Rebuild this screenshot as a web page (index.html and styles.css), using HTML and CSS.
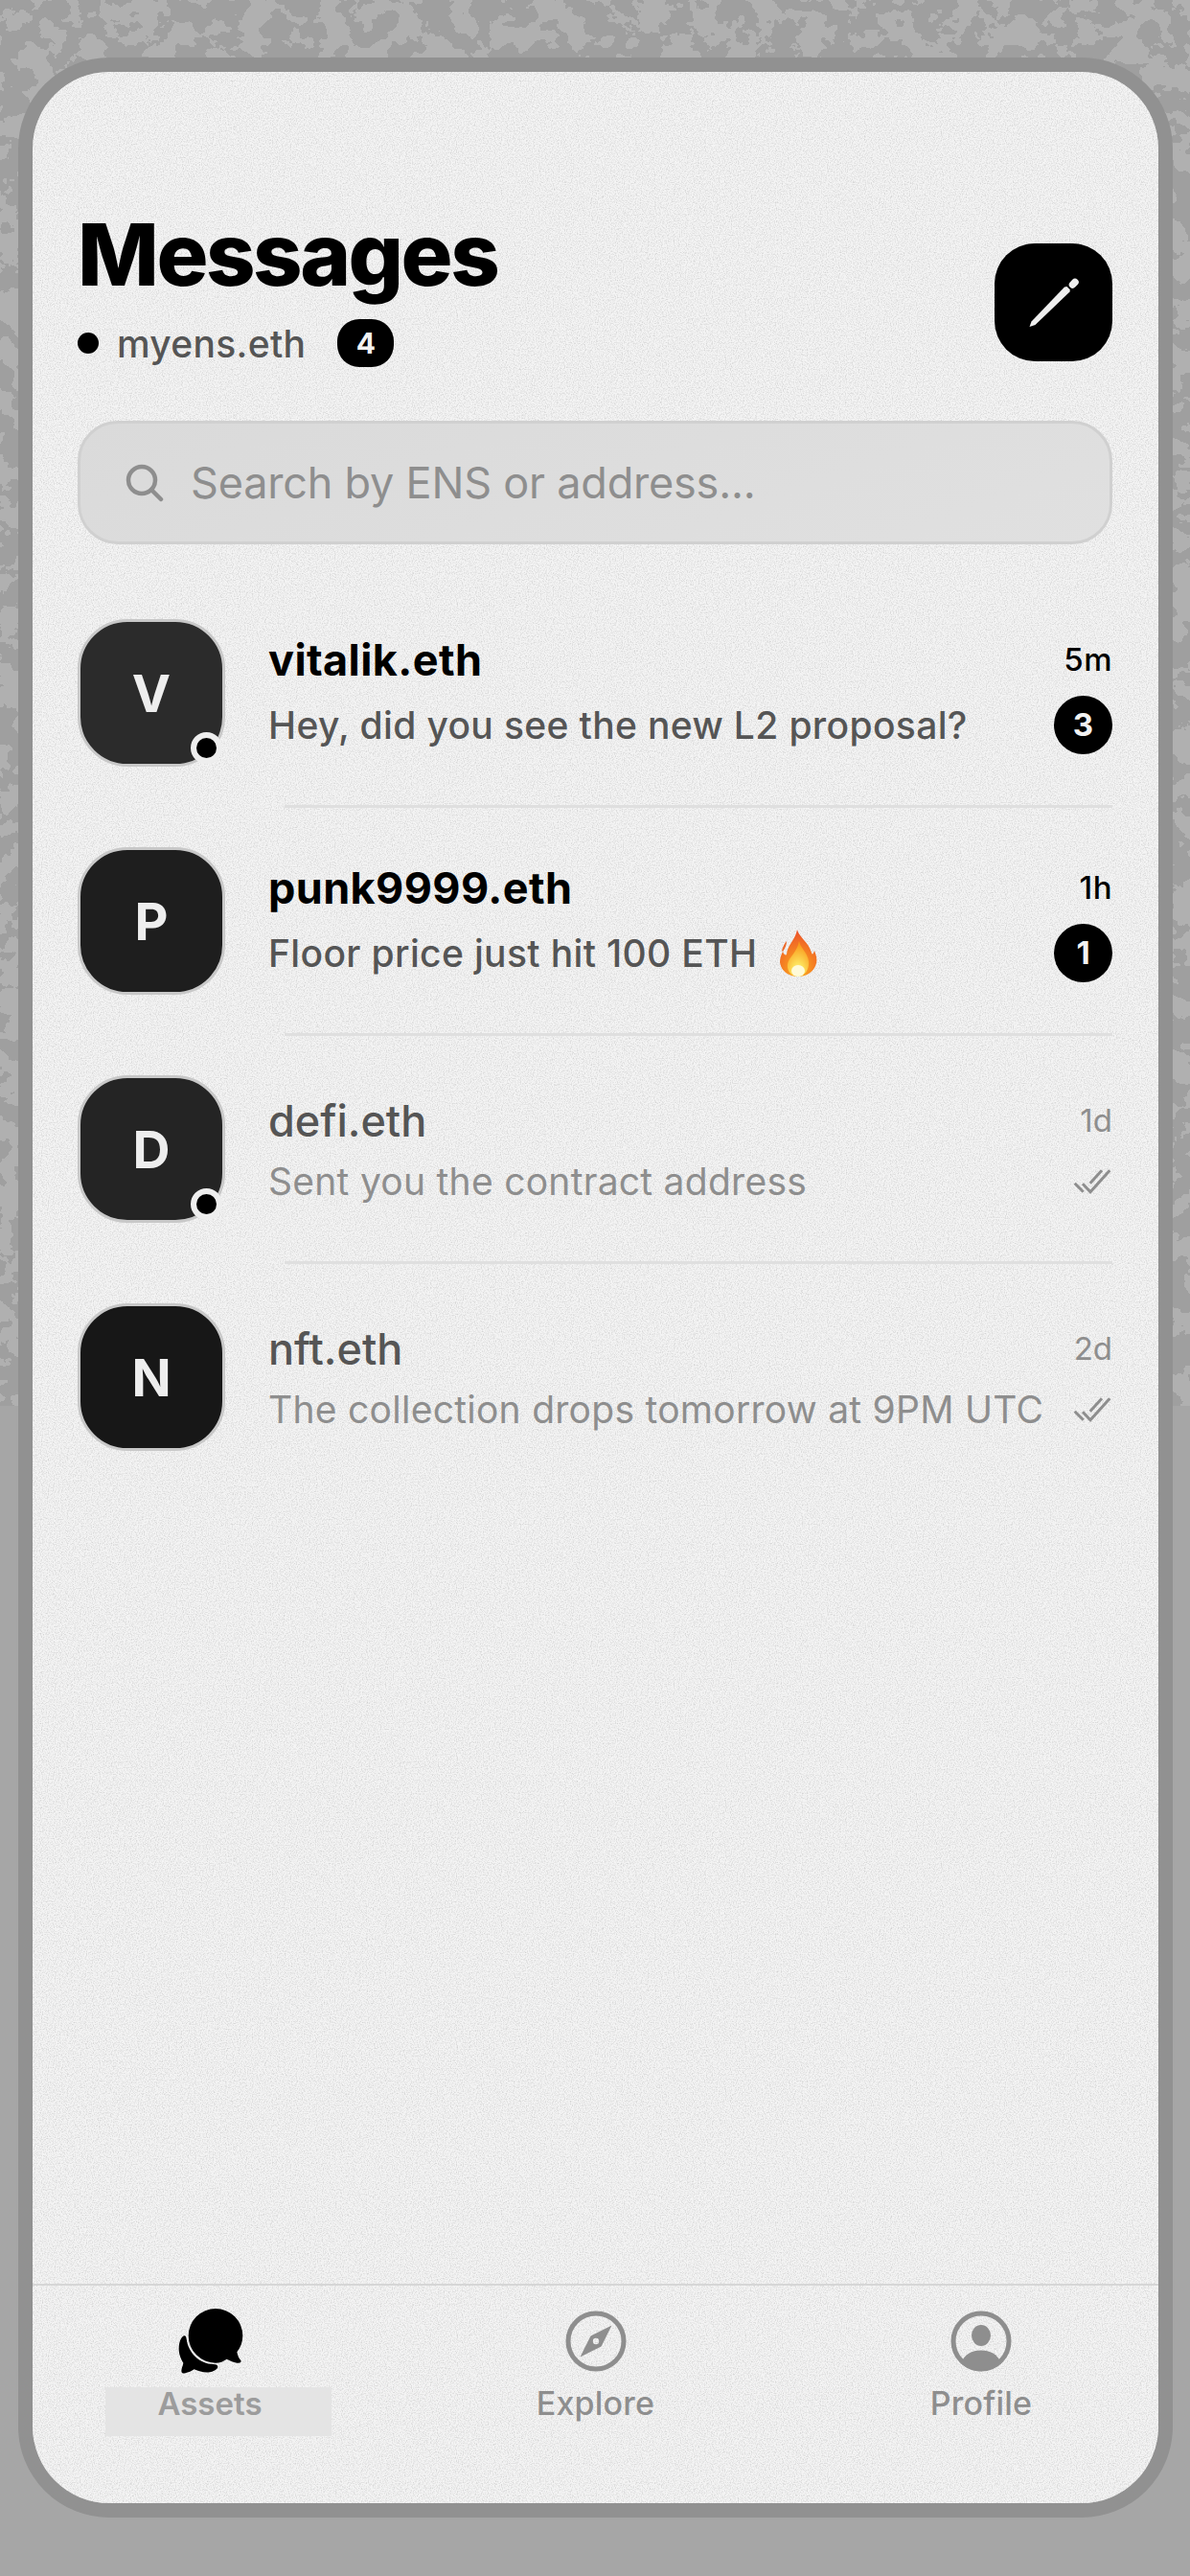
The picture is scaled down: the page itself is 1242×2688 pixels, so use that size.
FILE: index.html
```html
<!DOCTYPE html>
<html lang="en">
<head>
<meta charset="utf-8">
<title>Messages</title>
<link rel="stylesheet" href="styles.css">
</head>
<body>
<svg class="blotches" xmlns="http://www.w3.org/2000/svg" aria-hidden="true">
  <defs>
    <filter id="blotch" x="0" y="0" width="100%" height="100%" color-interpolation-filters="sRGB">
      <feTurbulence type="fractalNoise" baseFrequency="0.036 0.042" numOctaves="4" seed="7"/>
      <feColorMatrix values="0 0 0 0 0.625  0 0 0 0 0.625  0 0 0 0 0.625  1 0 0 0 0"/>
      <feComponentTransfer><feFuncA type="discrete" tableValues="0 1"/></feComponentTransfer>
    </filter>
  </defs>
  <rect class="blotch-base" width="100%" height="100%"/>
  <rect width="100%" height="100%" filter="url(#blotch)"/>
</svg>
<main class="frame">
  <div class="card">
    <svg class="grain" xmlns="http://www.w3.org/2000/svg" aria-hidden="true">
      <defs>
        <filter id="noise" x="0" y="0" width="100%" height="100%" color-interpolation-filters="sRGB">
          <feTurbulence type="fractalNoise" baseFrequency="0.85" numOctaves="2" seed="3"/>
          <feColorMatrix values="0.8 0 0 0 0.53  0.8 0 0 0 0.53  0.8 0 0 0 0.53  0 0 0 0 0.35"/>
        </filter>
      </defs>
      <rect width="100%" height="100%" filter="url(#noise)"/>
    </svg>
    <div class="content">
      <header class="header">
        <div class="heading">
          <h1 class="title">Messages</h1>
          <div class="identity">
            <span class="identity-dot"></span>
            <span class="identity-name">myens.eth</span>
            <span class="identity-count">4</span>
          </div>
        </div>
        <button class="compose" type="button" aria-label="New message">
          <svg class="compose-icon" viewBox="0 0 123 123" xmlns="http://www.w3.org/2000/svg">
            <path class="pencil-body" d="M36.5 87 L38.5 81.5 L73 45.5 L75.5 45 L78.8 48.3 L78.5 50.5 L42.5 85 Z"/>
            <path class="pencil-cap" d="M81.5 43 L84 40.4"/>
          </svg>
        </button>
      </header>

      <div class="search">
        <svg class="search-icon" viewBox="0 0 40 40" xmlns="http://www.w3.org/2000/svg">
          <circle cx="17" cy="17" r="14"/>
          <path d="M27 27 L37 37"/>
        </svg>
        <span class="search-text">Search by ENS or address...</span>
      </div>

      <section class="list">
        <article class="row unread">
          <div class="avatar avatar-v">V<span class="online"></span></div>
          <div class="row-body">
            <div class="row-top"><span class="name">vitalik.eth</span><span class="time">5m</span></div>
            <div class="row-bottom"><span class="msg">Hey, did you see the new L2 proposal?</span><span class="count">3</span></div>
          </div>
        </article>
        <div class="divider"></div>
        <article class="row unread">
          <div class="avatar avatar-p">P</div>
          <div class="row-body">
            <div class="row-top"><span class="name">punk9999.eth</span><span class="time">1h</span></div>
            <div class="row-bottom">
              <span class="msg">Floor price just hit 100 ETH
                <svg class="flame" viewBox="0 0 39 49" xmlns="http://www.w3.org/2000/svg">
                  <defs>
                    <radialGradient id="fl-a" cx="0.5" cy="0.85" r="0.85">
                      <stop offset="0" stop-color="#fbb521"/>
                      <stop offset="0.55" stop-color="#f47a22"/>
                      <stop offset="1" stop-color="#ea4f2c"/>
                    </radialGradient>
                    <radialGradient id="fl-b" cx="0.5" cy="0.9" r="0.8">
                      <stop offset="0" stop-color="#fff6b0"/>
                      <stop offset="0.35" stop-color="#fde05a"/>
                      <stop offset="1" stop-color="#f99a1c"/>
                    </radialGradient>
                  </defs>
                  <path fill="url(#fl-a)" d="M18 0 C20 8 30 13 33 24 C34 27 35 25 36 22 C38 27 39 31 38 35 C36 44 28 49 19 49 C9 49 1 43 0 34 C0 30 1 27 3 23 C4 26 6 27 7 26 C7 17 16 11 18 0Z"/>
                  <path fill="#ec6a2b" d="M2 22 C3 18 5 14 7 12 C7 15 6 19 3 23Z"/>
                  <path fill="url(#fl-b)" d="M20 12 C21 19 29 24 30 33 C31 41 26 49 19 49 C12 49 7 43 8 36 C9 29 18 24 20 12Z"/>
                  <ellipse cx="19" cy="43" rx="7" ry="6" fill="#fffbd8"/>
                </svg>
              </span>
              <span class="count">1</span>
            </div>
          </div>
        </article>
        <div class="divider"></div>
        <article class="row">
          <div class="avatar avatar-d">D<span class="online"></span></div>
          <div class="row-body">
            <div class="row-top"><span class="name">defi.eth</span><span class="time">1d</span></div>
            <div class="row-bottom">
              <span class="msg">Sent you the contract address</span>
              <svg class="read" viewBox="0 0 46 32" xmlns="http://www.w3.org/2000/svg">
                <path d="M6.7 18.7 L15.7 27.7 M15 19.3 L23 27.7 L43.3 5.3 M22.7 18.7 L35 5.3"/>
              </svg>
            </div>
          </div>
        </article>
        <div class="divider"></div>
        <article class="row">
          <div class="avatar avatar-n">N</div>
          <div class="row-body">
            <div class="row-top"><span class="name">nft.eth</span><span class="time">2d</span></div>
            <div class="row-bottom">
              <span class="msg">The collection drops tomorrow at 9PM UTC</span>
              <svg class="read" viewBox="0 0 46 32" xmlns="http://www.w3.org/2000/svg">
                <path d="M6.7 18.7 L15.7 27.7 M15 19.3 L23 27.7 L43.3 5.3 M22.7 18.7 L35 5.3"/>
              </svg>
            </div>
          </div>
        </article>
      </section>

      <nav class="nav">
        <div class="tab tab-active">
          <svg class="tab-icon" viewBox="126 81 222 222" xmlns="http://www.w3.org/2000/svg">
            <path class="chat" d="M255 90 A85 85 0 0 1 340 175 C340 195 333 212 322 226 C324 238 329 248 334 252 C337 257 331 262 322 260 C310 258 298 252 290 248 C280 255 268 260 255 260 A85 85 0 0 1 255 90Z"/>
            <path class="chat" d="M157 175 C147 178 140 195 140 215 C140 235 148 250 154 260 C152 270 148 278 148 285 C148 292 154 294 160 292 C170 290 180 285 188 280 C205 288 225 292 240 288 C252 285 262 278 262 272 C262 266 255 264 248 264 C205 262 170 230 164 185 C163 178 161 174 157 175Z"/>
          </svg>
          <span class="tab-label">Assets</span>
        </div>
        <div class="tab">
          <svg class="tab-icon" viewBox="-37 -37 74 74" xmlns="http://www.w3.org/2000/svg">
            <circle class="ring" cx="0" cy="0" r="29"/>
            <path class="solid" fill-rule="evenodd" d="M16.5 -16.5 L5.5 5.5 L-16.5 16.5 L-5.5 -5.5 Z M3.2 0 A3.2 3.2 0 1 0 -3.2 0 A3.2 3.2 0 1 0 3.2 0 Z"/>
          </svg>
          <span class="tab-label">Explore</span>
        </div>
        <div class="tab">
          <svg class="tab-icon" viewBox="-37 -37 74 74" xmlns="http://www.w3.org/2000/svg">
            <circle class="ring" cx="0" cy="0" r="29"/>
            <ellipse class="solid" cx="0" cy="-6" rx="10" ry="11"/>
            <path class="solid" d="M-21 23 C-17 13 -9 9.5 0 9.5 C9 9.5 17 13 21 23 A31 31 0 0 1 -21 23Z"/>
          </svg>
          <span class="tab-label">Profile</span>
        </div>
      </nav>
    </div>
  </div>
</main>
</body>
</html>
```

FILE: styles.css
```css
* { box-sizing: border-box; }

html, body { margin: 0; padding: 0; }

body {
  position: relative;
  width: 1242px;
  height: 2688px;
  overflow: hidden;
  background: #a6a6a6;
  font-family: Inter, "Liberation Sans", sans-serif;
  padding: 60px 18px 61px 19px;
}

.blotches {
  position: absolute;
  left: 0;
  top: 0;
  width: 1242px;
  height: 1467px;
}

.blotch-base { fill: #b0b0b0; }

.frame {
  position: relative;
  width: 1205px;
  height: 2567px;
  border: 15px solid #919191;
  border-radius: 95px;
  background: #919191;
}

.card {
  position: relative;
  width: 1175px;
  height: 100%;
  border-radius: 80px;
  background: #eeeeee;
  overflow: hidden;
}

.grain {
  position: absolute;
  left: 0;
  top: 0;
  width: 100%;
  height: 100%;
}

.content {
  position: relative;
  display: flex;
  flex-direction: column;
  height: 100%;
  padding-top: 137px;
}

.header {
  display: flex;
  justify-content: space-between;
  align-items: flex-end;
  padding: 0 48px 0 47px;
}

.title {
  margin: 0;
  font-size: 90px;
  line-height: 108px;
  font-weight: 800;
  letter-spacing: -2.5px;
  color: #000;
}

.identity {
  display: flex;
  align-items: center;
  margin-top: 13px;
  height: 50px;
}

.identity-dot {
  width: 22px;
  height: 22px;
  border-radius: 50%;
  background: #000;
}

.identity-name {
  margin-left: 19px;
  font-size: 39px;
  font-weight: 500;
  letter-spacing: 0.3px;
  color: #555;
}

.identity-count {
  display: flex;
  align-items: center;
  justify-content: center;
  margin-left: 33px;
  width: 59px;
  height: 50px;
  border-radius: 23px;
  background: #000;
  color: #f2f2f2;
  font-size: 30px;
  font-weight: 700;
}

.compose {
  width: 123px;
  height: 123px;
  margin-bottom: 6px;
  padding: 0;
  border: 0;
  border-radius: 42px;
  background: #000;
  display: block;
}

.compose-icon { display: block; width: 123px; height: 123px; }

.pencil-body { fill: #eeeeee; }

.pencil-cap { fill: none; stroke: #eeeeee; stroke-width: 7.5; stroke-linecap: round; }

.search {
  display: flex;
  align-items: center;
  height: 129px;
  margin: 56px 48px 0 47px;
  padding-left: 47px;
  border: 3px solid #d0d0d0;
  border-radius: 42px;
  background: linear-gradient(160deg, #dadada, #e0e0e0);
}

.search-icon {
  width: 40px;
  height: 40px;
  fill: none;
  stroke: #8e8e8e;
  stroke-width: 4.5;
  stroke-linecap: round;
}

.search-text {
  margin-left: 28px;
  font-size: 45px;
  letter-spacing: -0.2px;
  color: #8e8e8e;
}

.list {
  display: flex;
  flex-direction: column;
  flex: 1;
  margin-top: 78px;
  padding: 0 48px 0 47px;
}

.row {
  display: flex;
  align-items: center;
  gap: 45px;
  height: 154px;
}

.divider {
  height: 3px;
  margin: 40px 0 41px 216px;
  background: #dfdfdf;
}

.avatar {
  position: relative;
  flex: none;
  display: flex;
  align-items: center;
  justify-content: center;
  width: 154px;
  height: 154px;
  border: 3px solid #c8c8c8;
  border-radius: 52px;
  color: #eeeeee;
  font-size: 54px;
  font-weight: 700;
}

.avatar-v { background: #2b2b2b; }
.avatar-p { background: #1e1e1e; }
.avatar-d { background: #242424; }
.avatar-n { background: #171717; }

.online {
  position: absolute;
  right: 0;
  bottom: 0;
  width: 33px;
  height: 33px;
  border: 6px solid #eeeeee;
  border-radius: 50%;
  background: #000;
}

.row-body {
  flex: 1;
  min-width: 0;
  display: flex;
  flex-direction: column;
  gap: 9px;
}

.row-top,
.row-bottom {
  display: flex;
  align-items: center;
  justify-content: space-between;
}

.name {
  font-size: 45px;
  line-height: 57px;
  font-weight: 500;
  color: #555;
}

.time {
  font-size: 33px;
  line-height: 40px;
  color: #8e8e8e;
}

.msg {
  display: flex;
  align-items: center;
  gap: 24px;
  font-size: 39px;
  line-height: 51px;
  letter-spacing: 0.27px;
  white-space: nowrap;
  color: #8e8e8e;
}

.unread .name { font-weight: 700; letter-spacing: 0.4px; color: #000; }
.unread .time { font-weight: 500; letter-spacing: 0.5px; color: #000; }
.unread .msg { font-weight: 500; letter-spacing: 0.35px; color: #555; }

.count {
  display: flex;
  align-items: center;
  justify-content: center;
  width: 61px;
  height: 61px;
  border-radius: 50%;
  background: #000;
  color: #f2f2f2;
  font-size: 33px;
  font-weight: 700;
}

.read {
  width: 46px;
  height: 32px;
  fill: none;
  stroke: #8e8e8e;
  stroke-width: 3;
}

.flame { width: 39px; height: 49px; flex: none; }

.nav {
  display: flex;
  gap: 162.5px;
  height: 229px;
  padding: 21px 0 0 65px;
  border-top: 2px solid #d6d6d6;
}

.tab {
  position: relative;
  display: flex;
  flex-direction: column;
  align-items: center;
  width: 240px;
}

.tab-active::before {
  content: "";
  position: absolute;
  left: 11px;
  top: 85px;
  width: 236px;
  height: 51px;
  background: #e4e4e4;
}

.tab-icon {
  position: relative;
  display: block;
  width: 74px;
  height: 74px;
}

.chat { fill: #000; }

.ring { fill: none; stroke: #8e8e8e; stroke-width: 5; }

.solid { fill: #8e8e8e; }

.tab-label {
  position: relative;
  margin-top: 8px;
  font-size: 34px;
  line-height: 40px;
  font-weight: 500;
  letter-spacing: 0.2px;
  color: #8e8e8e;
}

.tab-active .tab-label { font-size: 33px; font-weight: 600; letter-spacing: 0; color: #9c9c9c; }
```
